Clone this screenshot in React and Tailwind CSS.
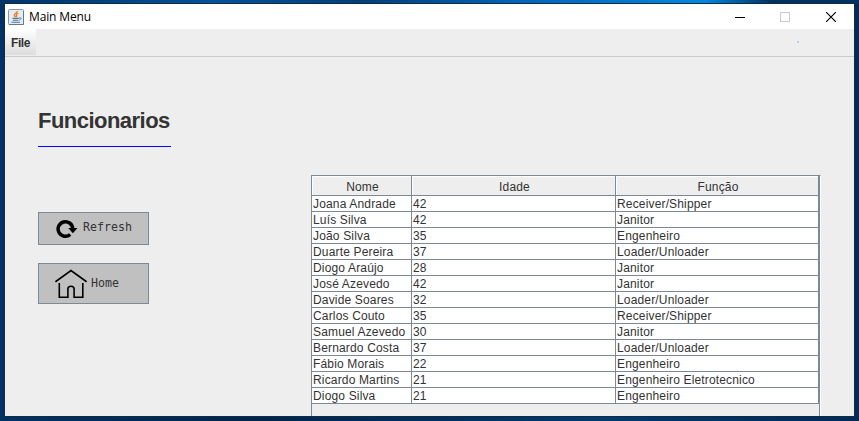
const rows = [
  ["Joana Andrade", "42", "Receiver/Shipper"],
  ["Luís Silva", "42", "Janitor"],
  ["João Silva", "35", "Engenheiro"],
  ["Duarte Pereira", "37", "Loader/Unloader"],
  ["Diogo Araújo", "28", "Janitor"],
  ["José Azevedo", "42", "Janitor"],
  ["Davide Soares", "32", "Loader/Unloader"],
  ["Carlos Couto", "35", "Receiver/Shipper"],
  ["Samuel Azevedo", "30", "Janitor"],
  ["Bernardo Costa", "37", "Loader/Unloader"],
  ["Fábio Morais", "22", "Engenheiro"],
  ["Ricardo Martins", "21", "Engenheiro Eletrotecnico"],
  ["Diogo Silva", "21", "Engenheiro"],
];

function JavaIcon() {
  return (
    <svg width="16" height="16" viewBox="0 0 16 16" fill="none">
      <rect x="0.5" y="0.5" width="15" height="15" rx="1" fill="#e4ebf1" stroke="#8098ad" />
      <path d="M1 15.5h14.5V2" stroke="#5b7a96" />
      <path d="M9.2 2C9.8 4 6 4.4 6.3 6.2c.1.9 1 1.2 1 2M10.3 4.4C8.4 5 8.1 5.8 8.6 6.5c.3.5 0 1-.4 1.6" stroke="#ee7d22" strokeWidth="1.4" />
      <path d="M4.5 9.4h6.3M5 11.3h5.4M3.5 13.3h8.5" stroke="#50779c" strokeWidth="1.1" />
      <path d="M11 9c2.8-1 2.6 1.6.3 2" stroke="#50779c" />
    </svg>
  );
}

function TitleBar() {
  return (
    <div className="flex h-[25px] shrink-0 items-center bg-white pl-[3px] pr-[18px]">
      <JavaIcon />
      <span className="ml-[5px] font-['Open_Sans','Noto_Sans',sans-serif] text-[12px] leading-[24px] tracking-[-0.13px] text-black">Main Menu</span>
      <div className="ml-auto flex items-center">
        <svg width="10" height="10" className="mr-[35px]"><path d="M0 5.5h10" stroke="#000" /></svg>
        <svg width="10" height="10" className="mr-[36px]"><rect x="0.5" y="0.5" width="9" height="9" fill="none" stroke="#cbcbcb" /></svg>
        <svg width="10" height="10"><path d="M0 0l10 10M10 0L0 10" stroke="#000" strokeWidth="1.15" /></svg>
      </div>
    </div>
  );
}

function MenuBar() {
  return (
    <div className="flex h-[28px] shrink-0 justify-between border-b border-[#cccccc]">
      <div className="h-[26px] w-[31px] bg-linear-to-b from-white to-[#dddddd] pl-[6px] text-[12px] font-bold leading-[28px] tracking-[-0.4px]">File</div>
      <div className="mr-[55px] mt-[12px] size-[2px] bg-[#b8cfe5]" />
    </div>
  );
}

function HeaderCell({ children }) {
  return (
    <th className="h-[20px] border-b border-r border-[#7a8a99] p-0 font-normal shadow-[inset_1px_1px_0_#fff]">
      <div className="pl-[2px] pt-[3px] leading-[16px]">{children}</div>
    </th>
  );
}

function EmployeeTable() {
  return (
    <div className="mt-[118px] h-[241px] w-[510px] border-l border-t border-r border-[#7a8a99] border-r-white">
      <div className="h-full border-r border-[#7a8a99]">
        <table className="w-[507px] table-fixed border-separate border-spacing-0 text-[12px] tracking-[0.16px]">
          <colgroup>
            <col className="w-[100px]" />
            <col className="w-[204px]" />
            <col className="w-[203px]" />
          </colgroup>
          <thead>
            <tr>
              <HeaderCell>Nome</HeaderCell>
              <HeaderCell>Idade</HeaderCell>
              <HeaderCell>Função</HeaderCell>
            </tr>
          </thead>
          <tbody className="bg-white">
            {rows.map((row) => (
              <tr key={row[0]}>
                {row.map((value, i) => (
                  <td key={i} className="h-[16px] whitespace-nowrap border-b border-r border-[#7a8a99] py-0 pl-px pr-0">
                    <div className="h-[15px] leading-[16px]">{value}</div>
                  </td>
                ))}
              </tr>
            ))}
          </tbody>
        </table>
      </div>
    </div>
  );
}

function Sidebar() {
  return (
    <div className="flex w-[273px] flex-col items-start">
      <h1 className="mt-[50px] h-[40px] w-[133px] whitespace-nowrap border-b border-[#0000ff] text-[22px] font-bold leading-[28px] tracking-[-0.53px]">Funcionarios</h1>
      <button className="mt-[65px] flex h-[33px] w-[111px] items-center border border-[#7a8a99] bg-[#c0c0c0] pl-[17px] font-['DejaVu_Sans_Mono',monospace] text-[11.6px] leading-[16px]">
        <svg width="22" height="20" viewBox="0 0 22 20" fill="none">
          <path d="M14.2 15.5A7.3 7.3 0 1 1 16.7 9.5" stroke="#000" strokeWidth="3.5" />
          <path d="M12.2 9h9.2l-4.5 5.3z" fill="#000" />
        </svg>
        <span className="ml-[5px] pb-[4px]">Refresh</span>
      </button>
      <button className="mt-[18px] flex h-[41px] w-[111px] items-center border border-[#7a8a99] bg-[#c0c0c0] pl-[16px] font-['DejaVu_Sans_Mono',monospace] text-[11.6px] leading-[16px]">
        <svg width="32" height="30" viewBox="0 0 32 30" fill="none" stroke="#000" strokeWidth="1.6">
          <path d="M.4 12.8L16 1.6l15.6 11.2" />
          <path d="M4.3 14v14.2h8.6V20q0-2.8 3.1-2.8t3.1 2.8v8.2h8.7V14" />
        </svg>
        <span className="ml-[4px] pb-[2px]">Home</span>
      </button>
    </div>
  );
}

export default function App() {
  return (
    <div className="h-[421px] w-[859px] overflow-hidden bg-[linear-gradient(90deg,#003568_0%,#00529a_25%,#003f78_42%,#0063b8_60%,#0088e0_82%,#00305f_90%,#00305f_100%)] font-['Liberation_Sans',Arial,sans-serif] text-[#333333]">
      <div className="h-full bg-[linear-gradient(90deg,#003264_0%,#00244c_30%,#003a70_70%,#002a58_100%)] bg-[length:100%_417px] bg-bottom bg-no-repeat px-[5px] pt-[4px]">
        <div className="flex h-[412px] w-[849px] flex-col bg-[#eeeeee] shadow-[0_0_0_1px_#102b42]">
          <TitleBar />
          <MenuBar />
          <div className="flex min-h-0 flex-1 overflow-hidden pl-[33px]">
            <Sidebar />
            <EmployeeTable />
          </div>
        </div>
      </div>
    </div>
  );
}
